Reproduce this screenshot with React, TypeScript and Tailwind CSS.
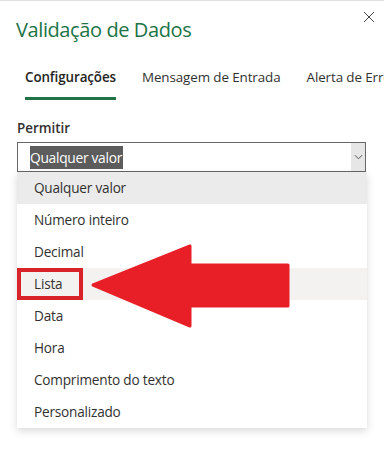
import React from "react";

const options = [
  "Qualquer valor",
  "Número inteiro",
  "Decimal",
  "Lista",
  "Data",
  "Hora",
  "Comprimento do texto",
  "Personalizado",
];

const App = () => {
  return (
    <div
      className="relative w-[384px] h-[455px] overflow-hidden bg-white border-t border-[#e1e1e1] text-[#323130]"
      style={{ fontFamily: '"Open Sans", "Noto Sans", sans-serif' }}
    >
      {/* close */}
      <button className="absolute right-[9px] top-[10px] w-[12px] h-[12px] text-[#444]">
        <svg viewBox="0 0 12 12" className="w-full h-full" fill="none" stroke="currentColor" strokeWidth="1">
          <path d="M1 1 L11 11 M11 1 L1 11" />
        </svg>
      </button>

      <h1 className="pl-[16px] pt-[15px] text-[20px] leading-[28px] font-medium text-[#217346] tracking-[-0.4px]">
        Validação de Dados
      </h1>

      {/* tabs */}
      <div className="flex pl-[25px] mt-[23px] gap-[26px] text-[13.4px] leading-[20px] tracking-[-0.1px] whitespace-nowrap">
        <div className="flex flex-col">
          <span className="font-semibold text-[#252423]">Configurações</span>
          <span className="mt-[10px] h-[3px] bg-[#217346]" />
        </div>
        <span className="text-[#323130]">Mensagem de Entrada</span>
        <span className="text-[#323130]">Alerta de Erro</span>
      </div>

      <div className="pl-[17px] mt-[18px] text-[13.4px] leading-[20px] font-semibold text-[#323130]">
        Permitir
      </div>

      <div className="mx-[17px] mt-[4px] w-[349px]">
        <div className="h-[30px] border border-[#666] flex items-center pl-[12px]">
          <span className="bg-[#5c5c5c] text-white text-[13.8px] leading-[23px] pr-[1px] tracking-[-0.3px]">
            Qualquer valor
          </span>
          <div className="ml-auto h-full w-[14px] bg-[#e6e6e6] flex items-center justify-center">
            <svg viewBox="0 0 10 6" className="w-[9px] h-[6px]" fill="none" stroke="#444" strokeWidth="1">
              <path d="M1 1 L5 5 L9 1" />
            </svg>
          </div>
        </div>
        <ul className="w-[350px] bg-white shadow-[0_3px_8px_rgba(0,0,0,0.15)]">
          {options.map((o, i) => (
            <li
              key={o}
              className={`h-[32px] flex items-center pl-[17px] text-[13.6px] tracking-[-0.2px] ${
                i === 0 ? "bg-[#ebebeb]" : i === 3 ? "bg-[#f3f2f1]" : ""
              }`}
            >
              {i === 3 ? (
                <span className="-ml-[17px] h-[32px] w-[66px] border-[4px] border-[#d8232a] flex items-center pl-[13px]">
                  {o}
                </span>
              ) : (
                o
              )}
            </li>
          ))}
        </ul>
      </div>

      {/* annotation arrow */}
      <svg className="absolute left-0 top-0" width="384" height="455" viewBox="0 0 384 455">
        <polygon
          points="93,284 190,245 190,264 288,264 288,305 190,305 190,325"
          fill="#e81f27"
          stroke="#e81f27"
          strokeWidth="3"
          strokeLinejoin="round"
        />
      </svg>
    </div>
  );
};

export default App;
